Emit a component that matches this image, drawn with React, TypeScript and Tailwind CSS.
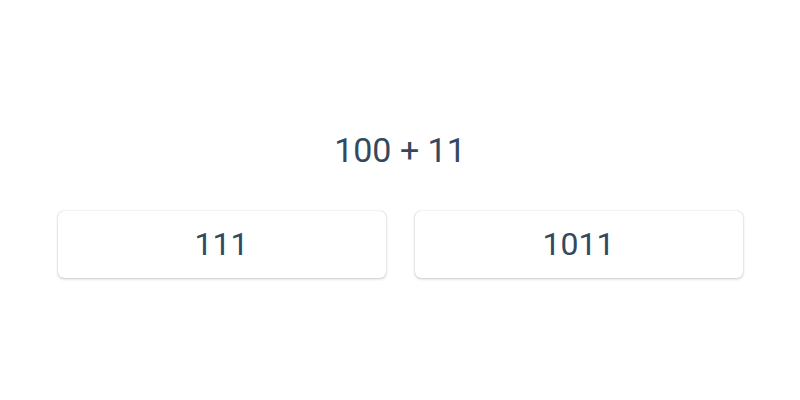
export default function App() {
  return (
    <div className="w-[800px] h-[400px] bg-white flex flex-col items-center" style={{ fontFamily: "Roboto, sans-serif" }}>
      <div className="mt-[130px] h-[40px] flex items-center text-[34px] text-[#34495e] leading-none">100 + 11</div>
      <div className="mt-[41px] flex gap-[29px]">
        <button className="w-[328px] h-[67px] rounded-[6px] bg-white text-[32px] text-[#34495e] leading-none pb-[1px] shadow-[0_1px_3px_rgba(0,0,0,0.2),0_0_1px_rgba(0,0,0,0.25)]">111</button>
        <button className="w-[328px] h-[67px] rounded-[6px] bg-white text-[32px] text-[#34495e] leading-none pb-[1px] shadow-[0_1px_3px_rgba(0,0,0,0.2),0_0_1px_rgba(0,0,0,0.25)]">1011</button>
      </div>
    </div>
  );
}
